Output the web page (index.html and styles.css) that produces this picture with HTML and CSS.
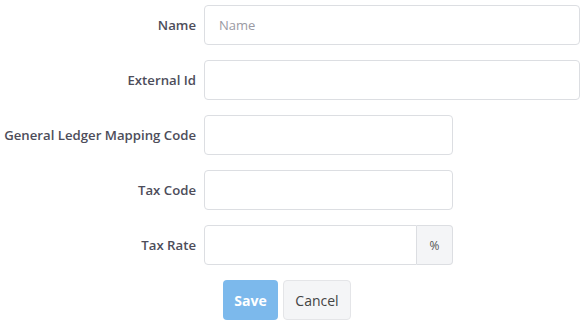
FILE: index.html
```html
<!DOCTYPE html>
<html lang="en">
<head>
    <meta charset="UTF-8" />
    <title>Tax Settings</title>
    <link rel="stylesheet" href="styles.css">
</head>
<body>
    <form class="tax-form">
        <label class="form-label" for="name">Name</label>
        <input class="form-input" type="text" id="name" placeholder="Name" />

        <label class="form-label" for="externalId">External Id</label>
        <input class="form-input" type="text" id="externalId" />

        <label class="form-label" for="glCode">General Ledger Mapping Code</label>
        <input class="form-input short" type="text" id="glCode" />

        <label class="form-label" for="taxCode">Tax Code</label>
        <input class="form-input short" type="text" id="taxCode" />

        <label class="form-label" for="taxRate">Tax Rate</label>
        <div class="input-group short">
            <input class="form-input" type="text" id="taxRate" />
            <span class="addon">%</span>
        </div>

        <div class="actions">
            <button type="button" class="btn btn-save">Save</button>
            <button type="button" class="btn btn-cancel">Cancel</button>
        </div>
    </form>
</body>
</html>
```

FILE: styles.css
```css
body {
    margin: 0;
    background: #fff;
    font-family: "Open Sans", Arial, sans-serif;
    color: #4d4d5a;
}
.tax-form {
    display: grid;
    grid-template-columns: 196px 376px;
    column-gap: 8px;
    row-gap: 15px;
    grid-auto-rows: 40px;
    padding-top: 5px;
}
.form-label {
    justify-self: end;
    align-self: center;
    font-size: 13.2px;
    font-weight: 600;
}
.form-input {
    box-sizing: border-box;
    height: 40px;
    width: 100%;
    border: 1px solid #dcdee2;
    border-radius: 4px;
    padding: 0 14px;
    font-family: inherit;
    font-size: 13px;
    color: #444;
    outline: none;
}
.form-input::placeholder {
    color: #9a9aa3;
}
.short {
    width: 249px;
}
.input-group {
    display: flex;
}
.input-group .form-input {
    flex: 1;
    border-radius: 4px 0 0 4px;
}
.addon {
    box-sizing: border-box;
    width: 36px;
    height: 40px;
    border: 1px solid #dcdee2;
    border-left: none;
    border-radius: 0 4px 4px 0;
    background: #f4f5f7;
    display: flex;
    align-items: center;
    justify-content: center;
    font-size: 12px;
    color: #555;
}
.actions {
    grid-column: 2;
    display: flex;
    gap: 5px;
    padding-left: 19px;
}
.btn {
    box-sizing: border-box;
    height: 40px;
    border-radius: 4px;
    font-family: inherit;
    font-size: 14px;
    padding: 0;
    cursor: pointer;
}
.btn-save {
    width: 55px;
    border: none;
    background: #7cb9ec;
    color: #fff;
    font-weight: 700;
}
.btn-cancel {
    width: 68px;
    border: 1px solid #e4e5e8;
    background: #f4f5f7;
    color: #444;
}
```
